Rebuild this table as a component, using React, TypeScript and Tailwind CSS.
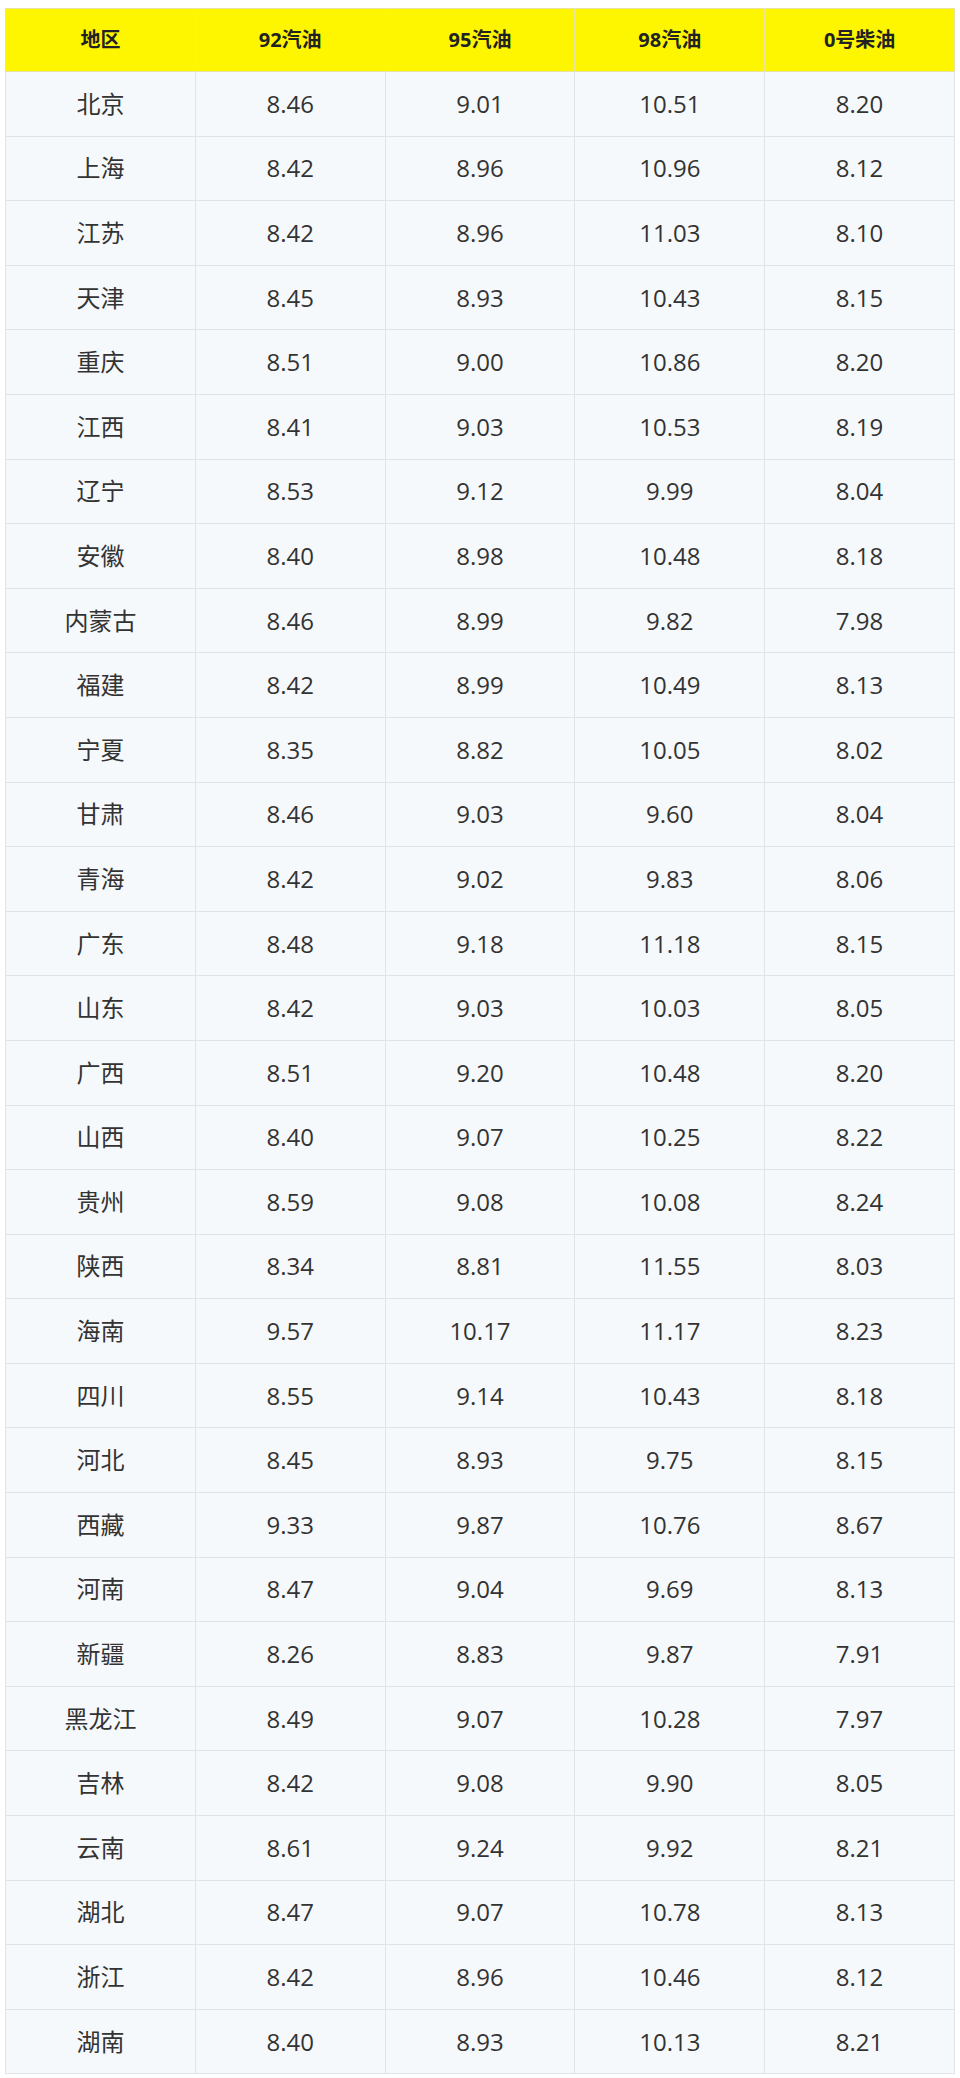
const headers = ['地区', '92汽油', '95汽油', '98汽油', '0号柴油'];

const rows: [string, string, string, string, string][] = [
  ['北京', '8.46', '9.01', '10.51', '8.20'],
  ['上海', '8.42', '8.96', '10.96', '8.12'],
  ['江苏', '8.42', '8.96', '11.03', '8.10'],
  ['天津', '8.45', '8.93', '10.43', '8.15'],
  ['重庆', '8.51', '9.00', '10.86', '8.20'],
  ['江西', '8.41', '9.03', '10.53', '8.19'],
  ['辽宁', '8.53', '9.12', '9.99', '8.04'],
  ['安徽', '8.40', '8.98', '10.48', '8.18'],
  ['内蒙古', '8.46', '8.99', '9.82', '7.98'],
  ['福建', '8.42', '8.99', '10.49', '8.13'],
  ['宁夏', '8.35', '8.82', '10.05', '8.02'],
  ['甘肃', '8.46', '9.03', '9.60', '8.04'],
  ['青海', '8.42', '9.02', '9.83', '8.06'],
  ['广东', '8.48', '9.18', '11.18', '8.15'],
  ['山东', '8.42', '9.03', '10.03', '8.05'],
  ['广西', '8.51', '9.20', '10.48', '8.20'],
  ['山西', '8.40', '9.07', '10.25', '8.22'],
  ['贵州', '8.59', '9.08', '10.08', '8.24'],
  ['陕西', '8.34', '8.81', '11.55', '8.03'],
  ['海南', '9.57', '10.17', '11.17', '8.23'],
  ['四川', '8.55', '9.14', '10.43', '8.18'],
  ['河北', '8.45', '8.93', '9.75', '8.15'],
  ['西藏', '9.33', '9.87', '10.76', '8.67'],
  ['河南', '8.47', '9.04', '9.69', '8.13'],
  ['新疆', '8.26', '8.83', '9.87', '7.91'],
  ['黑龙江', '8.49', '9.07', '10.28', '7.97'],
  ['吉林', '8.42', '9.08', '9.90', '8.05'],
  ['云南', '8.61', '9.24', '9.92', '8.21'],
  ['湖北', '8.47', '9.07', '10.78', '8.13'],
  ['浙江', '8.42', '8.96', '10.46', '8.12'],
  ['湖南', '8.40', '8.93', '10.13', '8.21'],
];

export default function App() {
  return (
    <div className="min-h-[2078px] bg-white pt-2 pl-[5px] font-['Open_Sans','Noto_Sans_CJK_SC',sans-serif]">
      <table className="w-[950px] table-fixed border-collapse">
        <thead>
          <tr className="h-[63px] bg-[#fdf600]">
            {headers.map((h) => (
              <th
                key={h}
                className="border border-[#e9e4a0] text-[20px] font-bold text-[#222]"
              >
                {h}
              </th>
            ))}
          </tr>
        </thead>
        <tbody>
          {rows.map((r) => (
            <tr key={r[0]} className="h-[64.6px] bg-[#f6f9fc]">
              {r.map((c, i) => (
                <td
                  key={i}
                  className="border border-[#dfe4ea] text-center text-[24px] text-[#333]"
                >
                  {c}
                </td>
              ))}
            </tr>
          ))}
        </tbody>
      </table>
    </div>
  );
}
